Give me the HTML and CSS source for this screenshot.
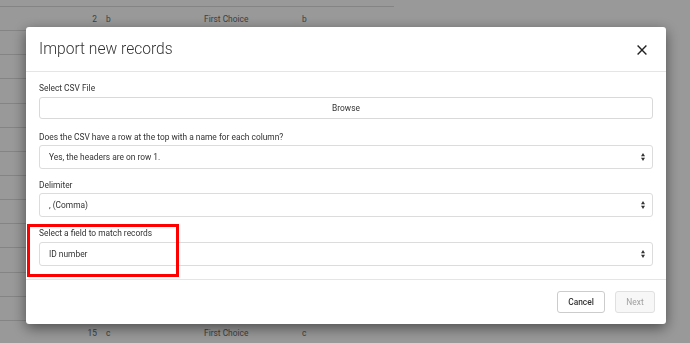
FILE: index.html
```html
<!DOCTYPE html>
<html lang="en">
<head>
    <meta charset="UTF-8">
    <meta name="viewport" content="width=device-width, initial-scale=1.0">
    <title>Import new records</title>
    <link rel="stylesheet" href="styles.css">
</head>
<body>

    <!-- records list behind the dialog (middle rows are hidden by it) -->
    <table class="records">
        <colgroup>
            <col class="col-num">
            <col class="col-key">
            <col class="col-choice">
            <col class="col-val">
        </colgroup>
        <tbody>
            <tr><td class="num">2</td><td class="key">b</td><td>First Choice</td><td>b</td></tr>
            <tr><td></td><td></td><td></td><td></td></tr>
            <tr><td></td><td></td><td></td><td></td></tr>
            <tr><td></td><td></td><td></td><td></td></tr>
            <tr><td></td><td></td><td></td><td></td></tr>
            <tr><td></td><td></td><td></td><td></td></tr>
            <tr><td></td><td></td><td></td><td></td></tr>
            <tr><td></td><td></td><td></td><td></td></tr>
            <tr><td></td><td></td><td></td><td></td></tr>
            <tr><td></td><td></td><td></td><td></td></tr>
            <tr><td></td><td></td><td></td><td></td></tr>
            <tr><td></td><td></td><td></td><td></td></tr>
            <tr><td></td><td></td><td></td><td></td></tr>
            <tr><td class="num">15</td><td class="key">c</td><td>First Choice</td><td>c</td></tr>
        </tbody>
    </table>

    <div class="backdrop">
        <div class="modal">
            <div class="modal-header">
                <h4 class="modal-title">Import new records</h4>
                <button class="close" type="button" aria-label="Close">
                    <svg width="10" height="10" viewBox="0 0 10 10">
                        <path d="M0.6 0.6 L9.4 9.4 M9.4 0.6 L0.6 9.4" stroke="#222" stroke-width="1.4" fill="none"/>
                    </svg>
                </button>
            </div>

            <div class="modal-body">
                <div class="field field-file">
                    <label>Select CSV File</label>
                    <button class="browse" type="button">Browse</button>
                </div>

                <div class="field">
                    <label>Does the CSV have a row at the top with a name for each column?</label>
                    <div class="select">
                        <span>Yes, the headers are on row 1.</span>
                        <svg class="caret" width="4" height="8" viewBox="0 0 4 8">
                            <path d="M0 3.2 L2 0 L4 3.2 Z M0 4.8 L4 4.8 L2 8 Z" fill="#333"/>
                        </svg>
                    </div>
                </div>

                <div class="field">
                    <label>Delimiter</label>
                    <div class="select">
                        <span>, (Comma)</span>
                        <svg class="caret" width="4" height="8" viewBox="0 0 4 8">
                            <path d="M0 3.2 L2 0 L4 3.2 Z M0 4.8 L4 4.8 L2 8 Z" fill="#333"/>
                        </svg>
                    </div>
                </div>

                <div class="field field-match">
                    <label>Select a field to match records</label>
                    <div class="select">
                        <span>ID number</span>
                        <svg class="caret" width="4" height="8" viewBox="0 0 4 8">
                            <path d="M0 3.2 L2 0 L4 3.2 Z M0 4.8 L4 4.8 L2 8 Z" fill="#333"/>
                        </svg>
                    </div>
                    <div class="highlight"></div>
                </div>
            </div>

            <div class="modal-footer">
                <button class="btn" type="button">Cancel</button>
                <button class="btn btn-disabled" type="button" disabled>Next</button>
            </div>
        </div>
    </div>

</body>
</html>
```

FILE: styles.css
```css
body {
    font-family: Roboto, 'Liberation Sans', sans-serif;
    font-size: 8.4px;
    margin: 0;
    padding: 6px 0 0;
    background-color: #ffffff;
    color: #333333;
}

/* background table */

.records {
    width: 394px;
    border-collapse: collapse;
    table-layout: fixed;
    color: #6b6b6b;
}

.col-num { width: 97px; }
.col-key { width: 107px; }
.col-choice { width: 98px; }
.col-val { width: 92px; }

.records tr {
    height: 24.15px;
    border-top: 1px solid #dddddd;
}

.records td {
    padding: 0;
    white-space: nowrap;
}

.records td.num {
    text-align: right;
}

.records td.key {
    padding-left: 9px;
}

/* dialog */

.backdrop {
    position: fixed;
    top: 0;
    left: 0;
    right: 0;
    bottom: 0;
    background-color: rgba(0, 0, 0, 0.4);
    padding: 27px 0 0 26px;
}

.modal {
    width: 640px;
    background-color: #ffffff;
    border-radius: 3px;
    box-shadow: 0 4px 14px rgba(0, 0, 0, 0.5);
}

.modal-header {
    height: 44px;
    padding: 0 19px 0 13px;
    display: flex;
    align-items: center;
    justify-content: space-between;
    border-bottom: 1px solid #e5e5e5;
}

.modal-title {
    margin: 0;
    font-size: 15.6px;
    font-weight: 300;
    color: #333333;
}

.close {
    padding: 0;
    border: none;
    background: none;
    display: flex;
    margin-top: 2px;
}

.modal-body {
    padding: 10px 13px 13px;
}

.field + .field {
    margin-top: 10px;
}

.field label {
    display: block;
    line-height: 12px;
    margin-bottom: 2px;
    color: #333333;
}

.field-file label {
    margin-bottom: 3px;
}

.field-file {
    margin-bottom: 12px;
}

.browse {
    width: 100%;
    height: 22px;
    border: 1px solid #d9d9d9;
    border-radius: 3px;
    background-color: #ffffff;
    font-family: inherit;
    font-size: 8.4px;
    color: #333333;
}

.select {
    height: 24px;
    box-sizing: border-box;
    border: 1px solid #dcdcdc;
    border-radius: 3px;
    padding: 0 7px 0 9px;
    display: flex;
    align-items: center;
    justify-content: space-between;
    color: #333333;
}

.field-match {
    position: relative;
}

.field-match label {
    margin-bottom: 3px;
}

/* annotation drawn over the last field */
.highlight {
    position: absolute;
    left: -12px;
    top: -3px;
    width: 152px;
    height: 53px;
    box-sizing: border-box;
    border: 3px solid #ff0000;
}

.modal-footer {
    border-top: 1px solid #e5e5e5;
    padding: 11px;
    display: flex;
    justify-content: flex-end;
    gap: 10px;
}

.btn {
    height: 22px;
    padding: 0 9px;
    border: 1px solid #cccccc;
    border-radius: 3px;
    background-color: #ffffff;
    font-family: inherit;
    font-size: 8.4px;
    font-weight: 500;
    color: #333333;
}

.btn:first-child {
    width: 48px;
}

.btn-disabled {
    width: 40px;
    border-color: #e0e0e0;
    background-color: #f7f7f7;
    color: #a0a0a0;
    font-weight: 400;
}
```
